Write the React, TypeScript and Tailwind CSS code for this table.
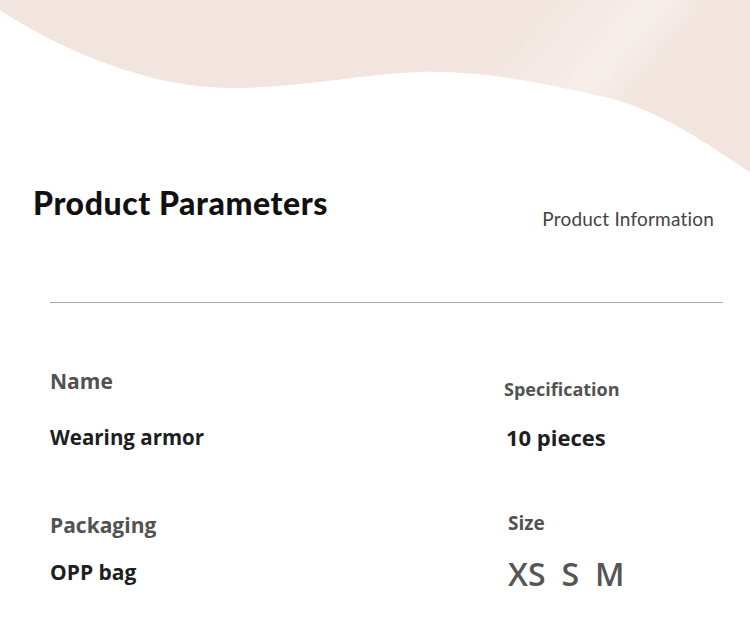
import React from "react";

const labelClass = "font-['Open_Sans',sans-serif] font-bold text-[#525252]";
const valueClass = "font-['Open_Sans',sans-serif] font-bold text-[#1e1e1e]";

function Wave() {
  return (
    <svg
      className="absolute left-0 top-0"
      width="750"
      height="180"
      viewBox="0 0 750 180"
      aria-hidden="true"
    >
      <defs>
        <linearGradient id="shine" x1="540" y1="0" x2="750" y2="170" gradientUnits="userSpaceOnUse">
          <stop offset="0" stopColor="#ffffff" stopOpacity="0" />
          <stop offset="0.35" stopColor="#ffffff" stopOpacity="0.35" />
          <stop offset="0.5" stopColor="#ffffff" stopOpacity="0" />
          <stop offset="1" stopColor="#ffffff" stopOpacity="0" />
        </linearGradient>
      </defs>
      <path
        d="M0,0 L750,0 L750,172 C715,150 660,108 600,96 C540,82 480,70 420,72 C360,74 300,88 230,88 C150,88 60,50 0,10 Z"
        fill="#f2e5df"
      />
      <path
        d="M0,0 L750,0 L750,172 C715,150 660,108 600,96 C540,82 480,70 420,72 C360,74 300,88 230,88 C150,88 60,50 0,10 Z"
        fill="url(#shine)"
      />
    </svg>
  );
}

export default function App() {
  return (
    <div className="relative h-[627px] w-[750px] overflow-hidden bg-white">
      <Wave />
      <div className="relative">
        <div className="flex items-start justify-between pl-[33px] pr-[36px] pt-[183px]">
          <h1 className="font-['Lato',sans-serif] text-[32px] font-black leading-[40px] tracking-[0.55px] text-[#111111]">
            Product Parameters
          </h1>
          <p className="mt-[24px] font-['Lato',sans-serif] text-[19px] leading-[24px] tracking-[0.2px] text-[#444444]">
            Product Information
          </p>
        </div>

        <div className="ml-[50px] mr-[27px] mt-[71px] border-t border-[#aaaaaa]" />

        <div className="grid grid-cols-[454px_1fr] pl-[50px]">
          <div>
            <p className={`${labelClass} mt-[64px] text-[21px] leading-[28px]`}>Name</p>
            <p className={`${valueClass} mt-[27px] text-[20.5px] leading-[30px]`}>Wearing armor</p>
          </div>
          <div>
            <p className={`${labelClass} mt-[74px] text-[18px] leading-[24px]`}>Specification</p>
            <p className={`${valueClass} mt-[21px] pl-[2px] text-[22px] leading-[30px]`}>10 pieces</p>
          </div>
          <div>
            <p className={`${labelClass} mt-[59px] text-[21px] leading-[28px]`}>Packaging</p>
            <p className={`${valueClass} mt-[18px] text-[21px] leading-[30px]`}>OPP bag</p>
          </div>
          <div className="pl-[4px]">
            <p className={`${labelClass} mt-[59px] text-[19px] leading-[24px]`}>Size</p>
            <p className="mt-[19px] flex gap-[16px] font-['Open_Sans',sans-serif] text-[32px] font-semibold leading-[40px] text-[#555555]">
              <span>XS</span>
              <span>S</span>
              <span>M</span>
            </p>
          </div>
        </div>
      </div>
    </div>
  );
}
